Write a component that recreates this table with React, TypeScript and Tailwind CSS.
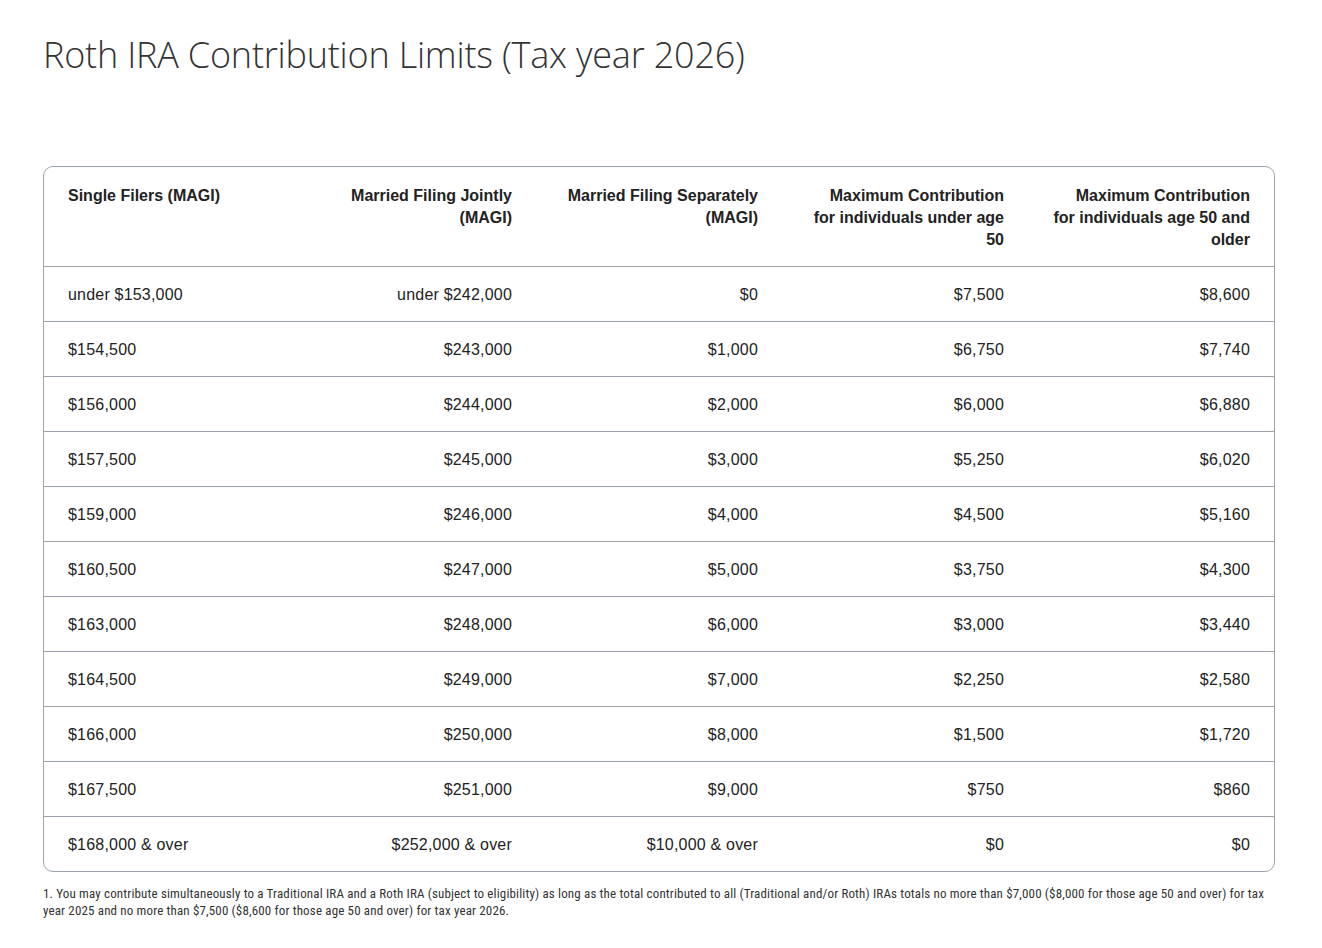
const headers = [
  'Single Filers (MAGI)',
  'Married Filing Jointly (MAGI)',
  'Married Filing Separately (MAGI)',
  'Maximum Contribution for individuals under age 50',
  'Maximum Contribution for individuals age 50 and older',
]

const rows = [
  ['under $153,000', 'under $242,000', '$0', '$7,500', '$8,600'],
  ['$154,500', '$243,000', '$1,000', '$6,750', '$7,740'],
  ['$156,000', '$244,000', '$2,000', '$6,000', '$6,880'],
  ['$157,500', '$245,000', '$3,000', '$5,250', '$6,020'],
  ['$159,000', '$246,000', '$4,000', '$4,500', '$5,160'],
  ['$160,500', '$247,000', '$5,000', '$3,750', '$4,300'],
  ['$163,000', '$248,000', '$6,000', '$3,000', '$3,440'],
  ['$164,500', '$249,000', '$7,000', '$2,250', '$2,580'],
  ['$166,000', '$250,000', '$8,000', '$1,500', '$1,720'],
  ['$167,500', '$251,000', '$9,000', '$750', '$860'],
  ['$168,000 & over', '$252,000 & over', '$10,000 & over', '$0', '$0'],
]

export default function App() {
  return (
    <div className="min-h-screen bg-white pl-[43px] pr-[47px] pt-[30px] text-[#333] font-['Liberation_Sans',Arial,sans-serif]">
      <h1 className="text-[36px] leading-[50px] font-light font-['Open_Sans',sans-serif] text-[#333] tracking-[-0.2px]">
        Roth IRA Contribution Limits (Tax year 2026)
      </h1>

      <div className="mt-[86px] border border-[#9ba4ad] rounded-[10px] overflow-hidden">
        <table className="w-full table-fixed border-collapse">
          <thead>
            <tr>
              {headers.map((h, i) => (
                <th
                  key={h}
                  className={`align-top px-6 pt-[18px] pb-[15px] text-[16px] leading-[22px] font-bold text-[#222] ${
                    i === 0 ? 'text-left' : 'text-right'
                  }`}
                >
                  {h}
                </th>
              ))}
            </tr>
          </thead>
          <tbody>
            {rows.map((r, ri) => (
              <tr key={ri} className="border-t border-[#9ba4ad]">
                {r.map((c, ci) => (
                  <td
                    key={ci}
                    className={`px-6 pt-[17px] pb-[15px] text-[16px] leading-[22px] tracking-[0.2px] text-[#222] ${
                      ci === 0 ? 'text-left' : 'text-right'
                    }`}
                  >
                    {c}
                  </td>
                ))}
              </tr>
            ))}
          </tbody>
        </table>
      </div>

      <p className="mt-[13px] text-[13px] leading-[17px] tracking-[0.15px] text-[#333] font-['Liberation_Sans_Narrow','Roboto_Condensed',sans-serif]">
        1. You may contribute simultaneously to a Traditional IRA and a Roth IRA (subject to eligibility) as long as the total contributed to all (Traditional and/or Roth) IRAs totals no more than $7,000 ($8,000 for those age 50 and over) for tax year 2025 and no more than $7,500 ($8,600 for those age 50 and over) for tax year 2026.
      </p>
    </div>
  )
}
